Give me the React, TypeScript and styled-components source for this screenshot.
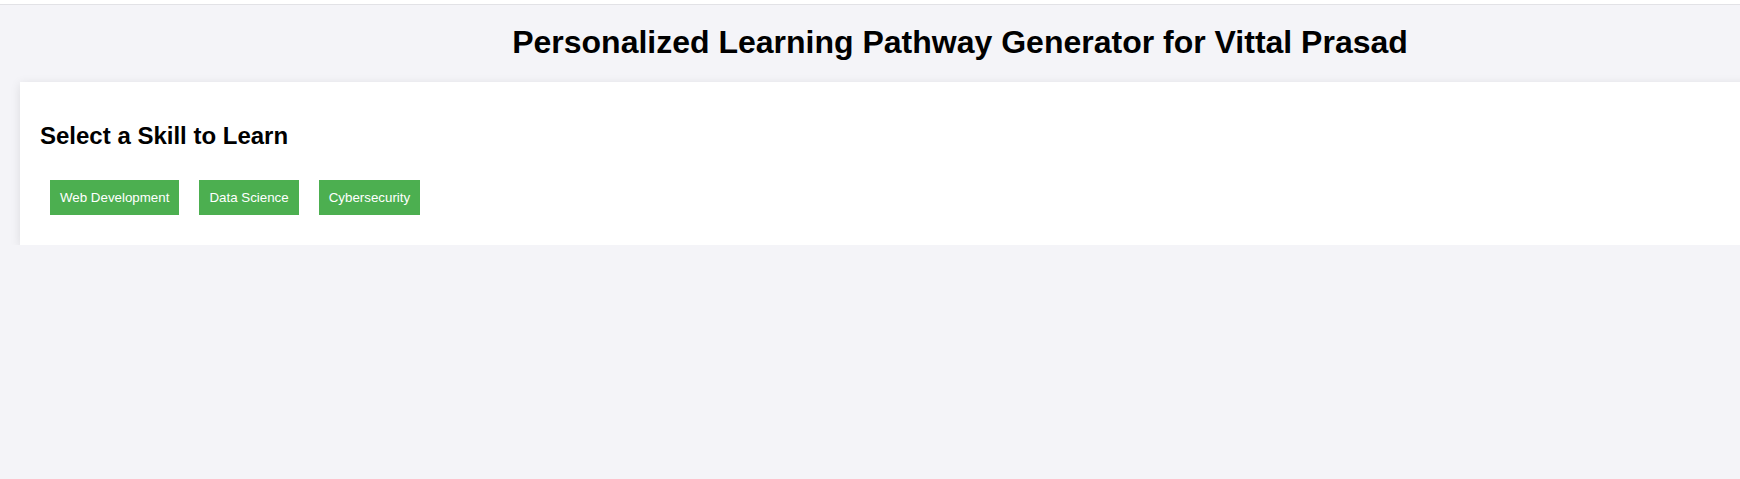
import styled, { createGlobalStyle } from "styled-components";

const skills = ["Web Development", "Data Science", "Cybersecurity"];

const GlobalStyle = createGlobalStyle`
  body {
    margin: 0;
    background: #f4f4f8;
    font-family: "Liberation Sans", Arial, sans-serif;
    overflow: hidden;
  }
`;

const App = () => {
  return (
    <>
      <GlobalStyle />
      <TopStrip />
      <Page>
        <Title>Personalized Learning Pathway Generator for Vittal Prasad</Title>
        <Card>
          <SectionTitle>Select a Skill to Learn</SectionTitle>
          <SkillRow>
            {skills.map((skill) => (
              <SkillButton key={skill}>{skill}</SkillButton>
            ))}
          </SkillRow>
        </Card>
      </Page>
    </>
  );
};

export default App;

const TopStrip = styled.div`
  height: 4px;
  background: #ffffff;
  border-bottom: 1px solid #e2e2e6;
`;

const Page = styled.div`
  width: 1920px;
  padding: 0 20px;
  box-sizing: border-box;
`;

const Title = styled.h1`
  margin: 19px 0 21px;
  text-align: center;
  color: #000000;
  font-size: 32px;
  font-weight: bold;
`;

const Card = styled.div`
  background: #ffffff;
  padding: 20px;
  box-shadow: 0 2px 10px rgba(0, 0, 0, 0.1);
`;

const SectionTitle = styled.h2`
  margin: 20px 0;
  color: #000000;
  font-size: 24px;
  font-weight: bold;
`;

const SkillRow = styled.div`
  display: flex;
`;

const SkillButton = styled.button`
  margin: 10px;
  padding: 10px;
  border: none;
  background: #4caf50;
  color: #ffffff;
  font-family: "Liberation Sans", Arial, sans-serif;
  font-size: 13.333px;
  cursor: pointer;
`;
